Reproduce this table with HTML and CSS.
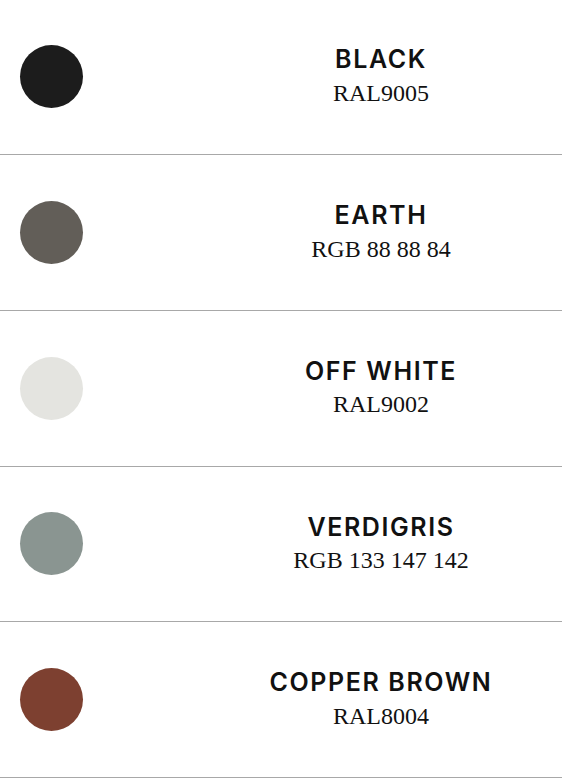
FILE: index.html
```html
<!DOCTYPE html>
<html>
<head>
<meta charset="utf-8">
<link rel="stylesheet" href="styles.css">
</head>
<body>
<ul class="swatches">
  <li class="swatch">
    <span class="dot dot-black"></span>
    <div class="info"><h3 class="name">BLACK</h3><p class="code">RAL9005</p></div>
  </li>
  <li class="swatch">
    <span class="dot dot-earth"></span>
    <div class="info"><h3 class="name">EARTH</h3><p class="code">RGB 88 88 84</p></div>
  </li>
  <li class="swatch">
    <span class="dot dot-offwhite"></span>
    <div class="info"><h3 class="name">OFF WHITE</h3><p class="code">RAL9002</p></div>
  </li>
  <li class="swatch">
    <span class="dot dot-verdigris"></span>
    <div class="info"><h3 class="name">VERDIGRIS</h3><p class="code">RGB 133 147 142</p></div>
  </li>
  <li class="swatch">
    <span class="dot dot-copper"></span>
    <div class="info"><h3 class="name">COPPER BROWN</h3><p class="code">RAL8004</p></div>
  </li>
</ul>
</body>
</html>
```
FILE: styles.css
```css
html, body {
  margin: 0;
  padding: 0;
  background: #fff;
}
.swatches {
  list-style: none;
  margin: -0.75px 0 0;
  padding: 0;
}
.swatch {
  display: grid;
  grid-template-columns: 200px 1fr;
  align-items: center;
  height: 154.75px;
  border-bottom: 1px solid #a8a8a8;
}
.dot {
  display: block;
  width: 63px;
  height: 63px;
  border-radius: 50%;
  margin-left: 20px;
}
.dot-black { background: #1c1c1c; }
.dot-earth { background: #625e58; }
.dot-offwhite { background: #e4e4e0; }
.dot-verdigris { background: #8a9591; }
.dot-copper { background: #7d4030; }
.info {
  text-align: center;
  padding-bottom: 2px;
}
.name {
  margin: 0;
  font-family: Inter, "Liberation Sans", sans-serif;
  font-weight: 600;
  font-size: 25px;
  letter-spacing: 1.6px;
  line-height: 30px;
  color: #111;
}
.code {
  margin: 4.5px 0 0;
  font-family: "Liberation Serif", serif;
  font-size: 24px;
  line-height: 28px;
  color: #111;
}
```
